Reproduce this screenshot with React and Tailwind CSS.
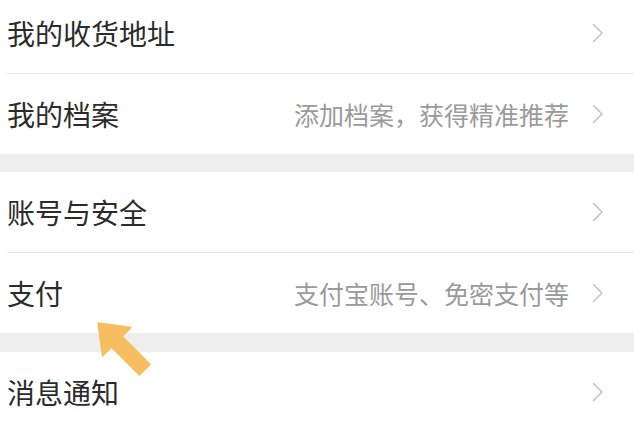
import React from 'react';

const Chevron = () => (
  <svg width="12" height="20" viewBox="0 0 12 20" className="shrink-0">
    <polyline points="1.5,1.5 10,10 1.5,18.5" fill="none" stroke="#c4c4c4" strokeWidth="1.6" strokeLinecap="round" strokeLinejoin="round" />
  </svg>
);

const Row = ({ title, hint }) => (
  <div className="flex h-[80px] items-center justify-between pl-[7px] pr-[30px]">
    <span className="text-[28px] leading-none text-[#2b2b2b]">{title}</span>
    <div className="flex items-center gap-[23px]">
      {hint && <span className="text-[25px] leading-none text-[#9a9a9a]">{hint}</span>}
      <Chevron />
    </div>
  </div>
);

const Divider = () => <div className="ml-[7px] h-px bg-[#e6e6e6]" />;

const Band = ({ h }) => <div className={`${h} bg-[#eeeeee]`} />;

const App = () => {
  return (
    <div
      className="relative h-[427px] w-[634px] overflow-hidden bg-white"
      style={{ fontFamily: '"Noto Sans CJK SC", "Noto Sans", sans-serif' }}
    >
      <div className="-mt-[7px]">
        {/* 地址与档案 */}
        <Row title="我的收货地址" />
        <Divider />
        <Row title="我的档案" hint="添加档案，获得精准推荐" />
        <Band h="h-[18px]" />

        {/* 账号与支付 */}
        <Row title="账号与安全" />
        <Divider />
        <Row title="支付" hint="支付宝账号、免密支付等" />
        <Band h="h-[19px]" />

        <Row title="消息通知" />
      </div>

      {/* 指示箭头 */}
      <svg className="pointer-events-none absolute left-0 top-0" width="634" height="427">
        <polygon
          points="98,323 130.9,327.6 122,336.4 150,364.4 139.4,375 111.4,347 102.6,355.9"
          fill="#f6be5e"
          stroke="#f6be5e"
          strokeWidth="1.5"
          strokeLinejoin="round"
        />
      </svg>
    </div>
  );
};

export default App;
